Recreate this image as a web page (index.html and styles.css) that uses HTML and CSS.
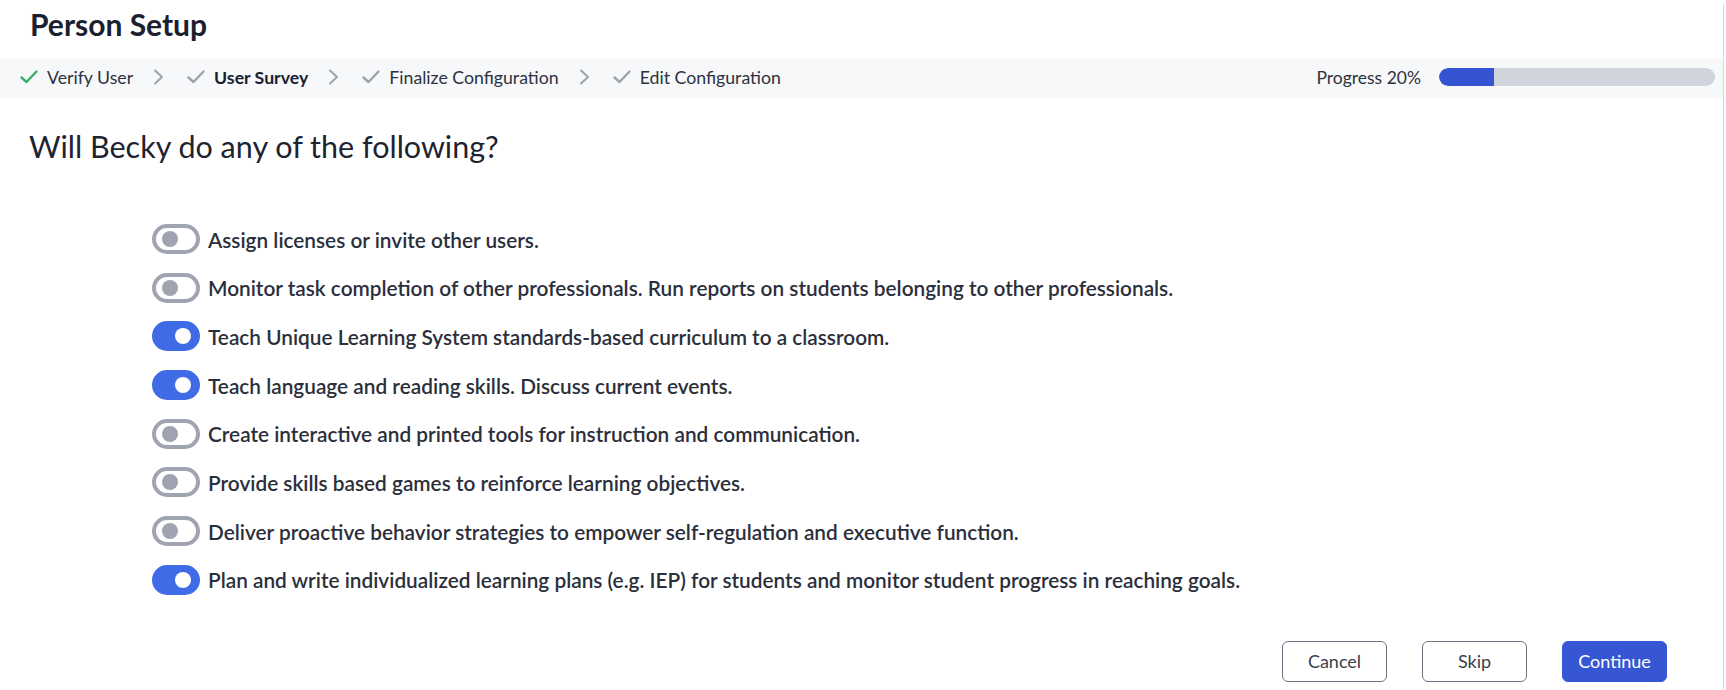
FILE: index.html
```html
<!DOCTYPE html>
<html lang="en">
<head>
<meta charset="utf-8">
<title>Person Setup</title>
<link rel="stylesheet" href="styles.css">
</head>
<body>
<div class="page">
  <h1 class="title">Person Setup</h1>
  <div class="steps">
    <ol class="crumbs">
      <li class="crumb done">
        <svg class="check" viewBox="0 0 18 14" width="18" height="14"><path d="M1.5 7.5 L6.5 12 L16.5 1.5" fill="none" stroke-width="2.4" stroke-linecap="round" stroke-linejoin="round"/></svg>
        <span>Verify User</span>
      </li>
      <li class="sep"><svg viewBox="0 0 11 16" width="11" height="16"><path d="M2 1.5 L9 8 L2 14.5" fill="none" stroke-width="2" stroke-linecap="round" stroke-linejoin="round"/></svg></li>
      <li class="crumb current">
        <svg class="check" viewBox="0 0 18 14" width="18" height="14"><path d="M1.5 7.5 L6.5 12 L16.5 1.5" fill="none" stroke-width="2.4" stroke-linecap="round" stroke-linejoin="round"/></svg>
        <span>User Survey</span>
      </li>
      <li class="sep"><svg viewBox="0 0 11 16" width="11" height="16"><path d="M2 1.5 L9 8 L2 14.5" fill="none" stroke-width="2" stroke-linecap="round" stroke-linejoin="round"/></svg></li>
      <li class="crumb">
        <svg class="check" viewBox="0 0 18 14" width="18" height="14"><path d="M1.5 7.5 L6.5 12 L16.5 1.5" fill="none" stroke-width="2.4" stroke-linecap="round" stroke-linejoin="round"/></svg>
        <span>Finalize Configuration</span>
      </li>
      <li class="sep"><svg viewBox="0 0 11 16" width="11" height="16"><path d="M2 1.5 L9 8 L2 14.5" fill="none" stroke-width="2" stroke-linecap="round" stroke-linejoin="round"/></svg></li>
      <li class="crumb">
        <svg class="check" viewBox="0 0 18 14" width="18" height="14"><path d="M1.5 7.5 L6.5 12 L16.5 1.5" fill="none" stroke-width="2.4" stroke-linecap="round" stroke-linejoin="round"/></svg>
        <span>Edit Configuration</span>
      </li>
    </ol>
    <div class="progress">
      <span class="progress-label">Progress 20%</span>
      <div class="bar"><div class="bar-fill" style="width:20%"></div></div>
    </div>
  </div>

  <h2 class="question">Will Becky do any of the following?</h2>

  <ul class="options">
    <li class="option"><span class="toggle"></span><span>Assign licenses or invite other users.</span></li>
    <li class="option"><span class="toggle"></span><span>Monitor task completion of other professionals. Run reports on students belonging to other professionals.</span></li>
    <li class="option"><span class="toggle on"></span><span>Teach Unique Learning System standards-based curriculum to a classroom.</span></li>
    <li class="option"><span class="toggle on"></span><span>Teach language and reading skills. Discuss current events.</span></li>
    <li class="option"><span class="toggle"></span><span>Create interactive and printed tools for instruction and communication.</span></li>
    <li class="option"><span class="toggle"></span><span>Provide skills based games to reinforce learning objectives.</span></li>
    <li class="option"><span class="toggle"></span><span>Deliver proactive behavior strategies to empower self-regulation and executive function.</span></li>
    <li class="option"><span class="toggle on"></span><span>Plan and write individualized learning plans (e.g. IEP) for students and monitor student progress in reaching goals.</span></li>
  </ul>

  <div class="actions">
    <button class="btn">Cancel</button>
    <button class="btn">Skip</button>
    <button class="btn primary">Continue</button>
  </div>
</div>
</body>
</html>
```

FILE: styles.css
```css
* { box-sizing: border-box; }

html, body {
  margin: 0;
  padding: 0;
  background: #ffffff;
}

body {
  font-family: Lato, "Noto Sans", "Liberation Sans", sans-serif;
  color: #2d3240;
  width: 1726px;
  height: 690px;
  overflow: hidden;
}

.page {
  width: 1724px;
  height: 690px;
  border-right: 1px solid #d6d8de;
}

.title {
  margin: 4px 0 0 30px;
  height: 40px;
  line-height: 40px;
  font-size: 30px;
  font-weight: 700;
  color: #1b2030;
}

.steps {
  margin-top: 14px;
  height: 40px;
  background: #f7f8fa;
  display: flex;
  align-items: center;
  justify-content: space-between;
  padding: 0 8px 2px 20px;
}

.crumbs {
  list-style: none;
  margin: 0;
  padding: 0;
  display: flex;
  align-items: center;
}

.crumb {
  display: flex;
  align-items: center;
  gap: 9px;
  font-size: 17.7px;
  color: #2d3240;
}

.crumb .check path { stroke: #9ea2ae; }
.crumb.done .check path { stroke: #3daf6b; }
.crumb.current span { font-weight: 700; color: #1b2030; }

.sep {
  display: flex;
  align-items: center;
  margin: 0 23px 0 20px;
}
.sep path { stroke: #9ea2ae; }

.progress {
  display: flex;
  align-items: center;
  gap: 18px;
}

.progress-label {
  font-size: 17.5px;
  color: #2d3240;
}

.bar {
  width: 276px;
  height: 18px;
  border-radius: 9px;
  background: #d0d4dd;
  overflow: hidden;
}

.bar-fill {
  height: 100%;
  background: #3554d1;
  border-radius: 9px 0 0 9px;
}

.question {
  margin: 28px 0 0 29px;
  font-size: 30.5px;
  font-weight: 400;
  line-height: 40px;
  color: #1e2331;
}

.options {
  list-style: none;
  margin: 58px 0 0 152px;
  padding: 0;
  display: flex;
  flex-direction: column;
  gap: 18.7px;
}

.option {
  display: flex;
  align-items: center;
  gap: 8px;
  font-size: 20.8px;
  font-weight: 600;
  color: #2b2f3b;
  height: 30px;
}

.toggle {
  position: relative;
  flex: none;
  width: 48px;
  height: 30px;
  border-radius: 15px;
  border: 4px solid #a0a4b1;
  background: #ffffff;
}

.toggle::after {
  content: "";
  position: absolute;
  top: 3px;
  left: 6px;
  width: 16px;
  height: 16px;
  border-radius: 50%;
  background: #a0a4b1;
}

.toggle.on {
  border-color: #3f6be6;
  background: #3f6be6;
}

.toggle.on::after {
  left: 19px;
  background: #ffffff;
}

.actions {
  display: flex;
  justify-content: flex-end;
  gap: 35px;
  margin-top: 46px;
  padding-right: 56px;
}

.btn {
  width: 105px;
  height: 41px;
  border-radius: 6px;
  border: 1px solid #6e7280;
  background: #ffffff;
  font-family: Lato, "Noto Sans", "Liberation Sans", sans-serif;
  font-size: 18px;
  color: #3a3f4c;
  cursor: pointer;
}

.btn.primary {
  background: #3656d3;
  border-color: #3656d3;
  color: #ffffff;
}
```
